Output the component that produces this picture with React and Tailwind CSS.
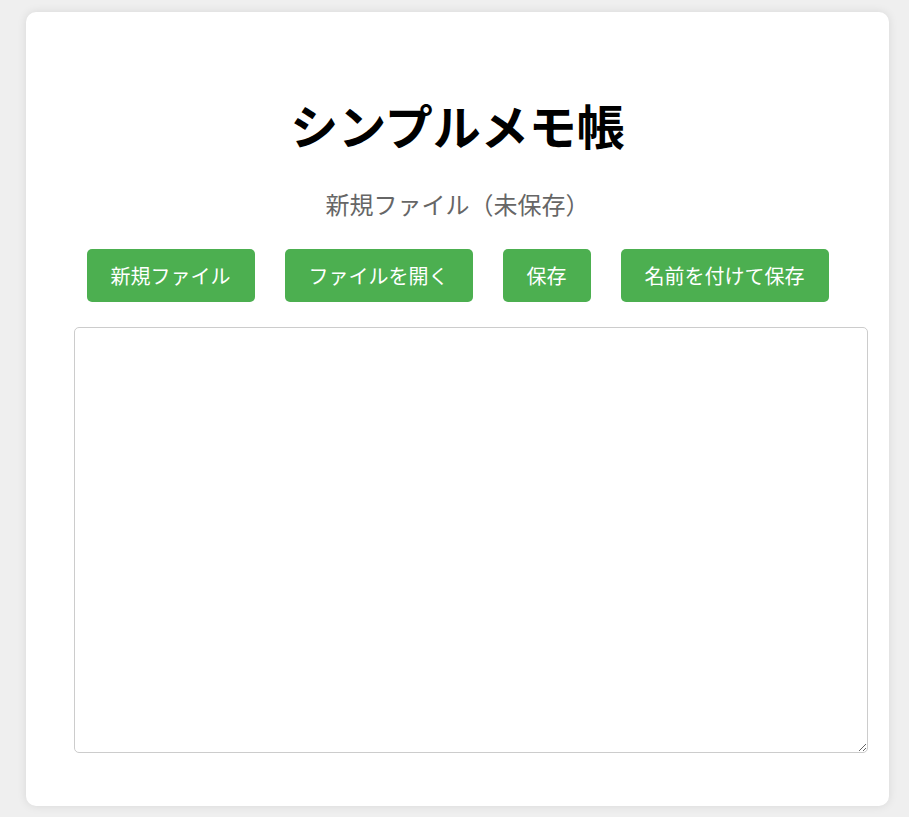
import { useState } from "react"

function App() {
  const [text, setText] = useState("")

  const buttons = ["新規ファイル", "ファイルを開く", "保存", "名前を付けて保存"]

  return (
    <div
      className="min-h-screen bg-[#efefef] pt-[12px] pl-[26px]"
      style={{ fontFamily: '"Noto Sans CJK JP", "Noto Sans", sans-serif' }}
    >
      <div className="w-[863px] h-[794px] bg-white rounded-[10px] shadow-[0_0_10px_rgba(0,0,0,0.1)] pt-[84px] flex flex-col">
        {/* Title */}
        <h1 className="text-center text-[48px] leading-[56px] font-bold text-black">シンプルメモ帳</h1>
        <p className="text-center text-[24px] leading-[32px] text-[#666] mt-[36px]">新規ファイル（未保存）</p>

        {/* Toolbar */}
        <div className="flex justify-center gap-[30px] mt-[29px]">
          {buttons.map((label) => (
            <button
              key={label}
              className="h-[53px] px-[24px] bg-[#4caf50] text-white text-[20px] rounded-[5px] hover:bg-[#45a049]"
            >
              {label}
            </button>
          ))}
        </div>

        {/* Editor */}
        <textarea
          value={text}
          onChange={(e) => setText(e.target.value)}
          className="mt-[25px] ml-[48px] w-[794px] h-[426px] border border-[#ccc] rounded-[5px] p-[10px] text-[16px] outline-none"
        />
      </div>
    </div>
  )
}

export default App
